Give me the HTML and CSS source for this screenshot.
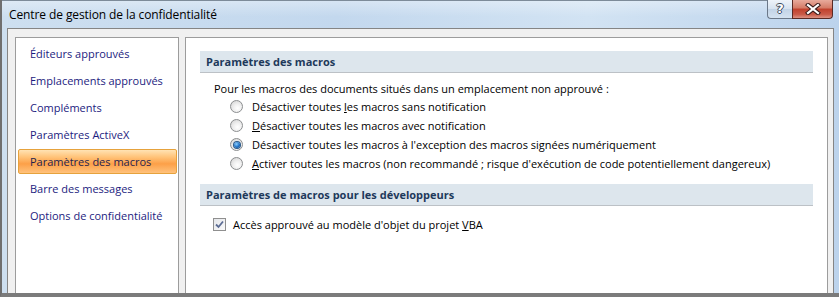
FILE: index.html
```html
<!DOCTYPE html>
<html lang="fr">
<head>
    <meta charset="UTF-8">
    <title>Centre de gestion de la confidentialité</title>
    <link rel="stylesheet" href="styles.css">
</head>
<body>
    <div class="window">
        <div class="titlebar">
            <span class="title">Centre de gestion de la confidentialité</span>
            <div class="caption-buttons">
                <div class="btn-help">?</div>
                <div class="btn-close">
                    <svg width="16" height="12" viewBox="0 0 16 12">
                        <path d="M3 2 L13 10 M13 2 L3 10" stroke="#3a1a1a" stroke-width="4.2" stroke-linecap="square"/>
                        <path d="M3 2 L13 10 M13 2 L3 10" stroke="#ffffff" stroke-width="2.2" stroke-linecap="square"/>
                    </svg>
                </div>
            </div>
        </div>

        <div class="frame">
            <div class="client">
                <!-- liste des catégories -->
                <ul class="nav">
                    <li class="nav-item">Éditeurs approuvés</li>
                    <li class="nav-item">Emplacements approuvés</li>
                    <li class="nav-item">Compléments</li>
                    <li class="nav-item">Paramètres ActiveX</li>
                    <li class="nav-item selected">Paramètres des macros</li>
                    <li class="nav-item">Barre des messages</li>
                    <li class="nav-item">Options de confidentialité</li>
                </ul>

                <div class="content">
                    <div class="section-title">Paramètres des macros</div>
                    <p class="intro">Pour les macros des documents situés dans un emplacement non approuvé :</p>
                    <div class="options">
                        <div class="option"><span class="radio"></span><span>Désactiver toutes <u>l</u>es macros sans notification</span></div>
                        <div class="option"><span class="radio"></span><span><u>D</u>ésactiver toutes les macros avec notification</span></div>
                        <div class="option"><span class="radio checked"></span><span>Désactiver toutes les macros à l'exception des macros si<u>g</u>nées numériquement</span></div>
                        <div class="option"><span class="radio"></span><span><u>A</u>ctiver toutes les macros (non recommandé ; risque d'exécution de code potentiellement dangereux)</span></div>
                    </div>

                    <div class="section-title second">Paramètres de macros pour les développeurs</div>
                    <div class="check-row">
                        <span class="checkbox">
                            <svg width="9" height="9" viewBox="0 0 9 9">
                                <path d="M1 4.5 L3.5 7 L8 1.5" fill="none" stroke="#5c6c94" stroke-width="1.8"/>
                            </svg>
                        </span>
                        <span>Accès approuvé au modèle d'objet du projet <u>V</u>BA</span>
                    </div>
                </div>
            </div>
        </div>
    </div>
</body>
</html>
```

FILE: styles.css
```css
body {
    margin: 0;
    padding: 0;
    font-family: "Open Sans", "Noto Sans", sans-serif;
    font-size: 11px;
    color: #000;
}

.window {
    width: 839px;
    height: 297px;
    box-sizing: border-box;
    display: flex;
    flex-direction: column;
    border-left: 2px solid #6f6f6f;
    border-bottom: 4px solid #7b7b7b;
    background: linear-gradient(to right, #cddff0, #c3d8ee 40%, #d2e3f3 70%, #bcd3ec);
    overflow: hidden;
}

/* barre de titre */
.titlebar {
    height: 28px;
    flex: none;
    display: flex;
    justify-content: space-between;
    padding: 0 6px 0 7px;
    box-shadow: inset 0 1px #7d8b99;
    background: linear-gradient(to bottom, rgba(255,255,255,0.35), rgba(255,255,255,0) 60%);
}

.title {
    align-self: center;
    padding-top: 1px;
    color: #000;
    font-size: 12px;
    letter-spacing: -0.1px;
}

.caption-buttons {
    display: flex;
    align-self: flex-start;
}

.btn-help {
    width: 25px;
    height: 19px;
    box-sizing: border-box;
    border: 1px solid #6b7888;
    border-top: none;
    border-right: none;
    border-radius: 0 0 0 4px;
    background: linear-gradient(to bottom, #eef3f9, #d6e2ef 50%, #c2d3e6 51%, #d4e2f0);
    color: #fff;
    font-family: "DejaVu Sans", sans-serif;
    font-weight: bold;
    font-size: 13px;
    line-height: 18px;
    text-align: center;
    text-shadow: 1px 0 #3c4a5c, -1px 0 #3c4a5c, 0 1px #3c4a5c, 0 -1px #3c4a5c;
}

.btn-close {
    width: 41px;
    height: 19px;
    box-sizing: border-box;
    border: 1px solid #5a2a24;
    border-top: none;
    border-radius: 0 0 4px 0;
    background: linear-gradient(to bottom, #e8aa9c, #d47a66 45%, #c0402c 50%, #c95a48 80%, #dc9284);
    display: flex;
    align-items: center;
    justify-content: center;
}

/* zone cliente */
.frame {
    flex: 1;
    min-height: 0;
    display: flex;
    margin: 0 5px 0 5px;
}

.client {
    flex: 1;
    display: flex;
    gap: 6px;
    padding: 8px 5px 0 7px;
    border: 1px solid #858585;
    border-bottom: none;
    background: #f0f0f0;
}

.nav {
    width: 164px;
    box-sizing: border-box;
    margin: 0;
    padding: 3px 1px 0 2px;
    list-style: none;
    background: #fff;
    border: 1px solid #9c9c9c;
    border-bottom: none;
}

.nav-item {
    height: 25px;
    box-sizing: border-box;
    line-height: 23px;
    padding-left: 11px;
    margin-bottom: 2px;
    border: 1px solid transparent;
    color: #1c1c80;
    white-space: nowrap;
}

.nav-item.selected {
    color: #1f1f50;
    border-color: #e6a23c;
    border-radius: 2px;
    background: linear-gradient(to bottom, #ffe3b4, #ffc47a 30%, #fca048 60%, #ffc27c);
}

.content {
    flex: 1;
    box-sizing: border-box;
    padding: 13px 14px 0 14px;
    background: #fff;
    border: 1px solid #9c9c9c;
    border-bottom: none;
}

.section-title {
    height: 22px;
    box-sizing: border-box;
    line-height: 21px;
    padding-left: 6px;
    background: #dde6ed;
    border-bottom: 1px solid #bcc1c6;
    color: #1e395b;
    font-weight: bold;
}

.section-title.second {
    margin-top: 11px;
}

.intro {
    margin: 8px 0 0 14px;
    line-height: 16px;
}

.option {
    height: 19px;
    display: flex;
    align-items: center;
    padding-left: 30px;
    white-space: nowrap;
}

.radio {
    width: 13px;
    height: 13px;
    box-sizing: border-box;
    margin-right: 9px;
    border-radius: 50%;
    border: 1px solid #8c8e90;
    background: radial-gradient(circle at 60% 65%, #ffffff, #f0f0f0 40%, #cfcfcf);
    display: flex;
    align-items: center;
    justify-content: center;
}

.radio.checked::after {
    content: "";
    width: 6px;
    height: 6px;
    border-radius: 50%;
    background: radial-gradient(circle at 40% 35%, #8ed0ff, #1c6fc4 55%, #0c3f7a);
    box-shadow: 0 0 0 1px #2a5a8a;
}

.check-row {
    display: flex;
    align-items: center;
    height: 18px;
    margin-top: 9px;
    padding-left: 13px;
    white-space: nowrap;
}

.checkbox {
    width: 13px;
    height: 13px;
    box-sizing: border-box;
    margin-right: 7px;
    border: 1px solid #8f8f8f;
    background: linear-gradient(135deg, #e4e6ea, #fafafa);
    display: flex;
    align-items: center;
    justify-content: center;
}
```
